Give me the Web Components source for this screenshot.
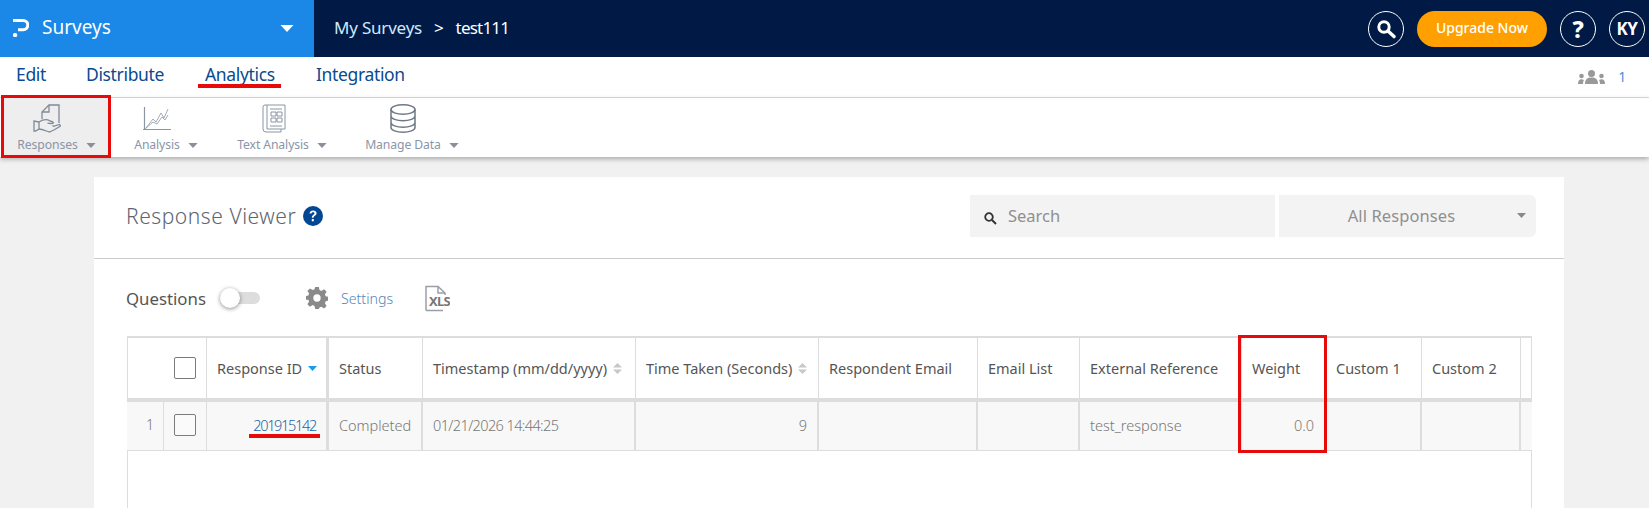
<!DOCTYPE html>
<html lang="en">
<head>
<meta charset="utf-8">
<title>Response Viewer</title>
<style>
  html, body { margin: 0; height: 508px; overflow: hidden; background: #f1f1f1; }
  body { font-family: "Noto Sans", "Open Sans", sans-serif; }
</style>
</head>
<body>
<app-header></app-header>
<nav-tabs></nav-tabs>
<tool-bar></tool-bar>
<response-viewer></response-viewer>

<script>
const caret = (color, w = 13, h = 7) =>
  `<svg width="${w}" height="${h}" viewBox="0 0 13 7"><path d="M0 0h13L6.5 7z" fill="${color}"/></svg>`;

class AppHeader extends HTMLElement {
  shadowRoot = this.attachShadow({ mode: 'open' });

  connectedCallback () {
    this.shadowRoot.innerHTML = `
      <style>
        :host { display: flex; height: 57px; background: #001a45; color: #fff; }
        .brand { width: 314px; box-sizing: border-box; background: #1b87e6; display: flex; align-items: center; padding: 0 20px 0 13px; }
        .brand svg:first-child { margin-right: 13px; margin-top: -1px; }
        .brand span { flex: 1; font-size: 19px; line-height: 24px; position: relative; top: -2px; }
        .crumbs { flex: 1; display: flex; align-items: center; padding-left: 20px; padding-bottom: 3px; box-sizing: border-box; font-size: 17px; color: #cfe8fd; letter-spacing: -.2px; }
        .crumbs i { font-style: normal; margin: 0 12px; color: #fff; }
        .crumbs b { font-weight: 400; color: #fff; letter-spacing: -.8px; }
        .actions { display: flex; align-items: center; padding-right: 4px; }
        .round { width: 34px; height: 34px; border: 1px solid #fff; border-radius: 50%; display: flex; align-items: center; justify-content: center; font-weight: 700; font-size: 17px; letter-spacing: -.5px; }
        .upgrade { width: 130px; height: 36px; border-radius: 18px; background: #ffa000; margin: 0 13px; display: flex; align-items: center; justify-content: center; font-size: 14px; font-weight: 500; padding-bottom: 3px; box-sizing: border-box; }
        .help { margin-right: 13px; font-size: 23px; font-weight: 800; }
      </style>
      <div class="brand">
        <svg width="16" height="18" viewBox="0 0 16 18" fill="none"><path d="M0 1.500h10.200a4.500 4.500 0 0 1 0 9.200H5" stroke="#fff" stroke-width="3"/><rect x="0" y="14" width="4.200" height="4" rx="1.500" fill="#fff"/></svg>
        <span>Surveys</span>
        ${caret('#fff', 14, 7)}
      </div>
      <div class="crumbs">My Surveys<i>&gt;</i><b>test111</b></div>
      <div class="actions">
        <div class="round"><svg width="20" height="20" viewBox="0 0 20 20" fill="none"><circle cx="8" cy="8" r="5.200" stroke="#fff" stroke-width="3"/><path d="M12 12l6 5.600" stroke="#fff" stroke-width="3.400" stroke-linecap="round"/></svg></div>
        <div class="upgrade">Upgrade Now</div>
        <div class="round help">?</div>
        <div class="round">KY</div>
      </div>`;
  }
}

class NavTabs extends HTMLElement {
  shadowRoot = this.attachShadow({ mode: 'open' });

  connectedCallback () {
    this.shadowRoot.innerHTML = `
      <style>
        :host { display: flex; align-items: center; height: 41px; box-sizing: border-box; background: #fff; border-bottom: 1px solid #ddd; font-size: 17.5px; color: #0a4a90; position: relative; letter-spacing: -.35px; }
        span { position: absolute; top: 5px; line-height: 24px; }
        .tabs { flex: 1; height: 100%; position: relative; }
        .mark { position: absolute; left: 198px; top: 27px; width: 83px; height: 4px; background: #e60a0a; }
        .users { display: flex; align-items: center; gap: 13px; padding-right: 23px; color: #4a90d9; font-size: 14px; }
      </style>
      <div class="tabs">
        <span style="left:16px">Edit</span>
        <span style="left:86px">Distribute</span>
        <span style="left:205px">Analytics</span>
        <span style="left:316px">Integration</span>
        <div class="mark"></div>
      </div>
      <div class="users">
        <svg width="27" height="14" viewBox="0 0 27 14" fill="#999"><circle cx="13.500" cy="3.500" r="3.500"/><path d="M7 14c0-5 2.500-6.500 6.500-6.500S20 9 20 14z"/><circle cx="3.500" cy="6" r="2.300"/><path d="M0 14c0-3 1.200-4.800 3.500-4.800 1 0 1.800.3 2.400.9C5.300 11 5 12.300 5 14z"/><circle cx="23.500" cy="6" r="2.300"/><path d="M27 14c0-3-1.200-4.800-3.500-4.800-1 0-1.800.3-2.400.9.600.9.900 2.200.9 3.900z"/></svg>
        <span style="position:static">1</span>
      </div>`;
  }
}

class ToolItem extends HTMLElement {
  shadowRoot = this.attachShadow({ mode: 'open' });

  connectedCallback () {
    this.shadowRoot.innerHTML = `
      <style>
        :host { display: flex; flex-direction: column; align-items: center; box-sizing: border-box; height: 59px; padding-top: 6px; flex: none; }
        :host([active]) { background: #eee; }
        .icon { height: 33px; display: flex; align-items: flex-start; justify-content: center; }
        .label { display: flex; align-items: center; gap: 8px; font-size: 12.2px; line-height: 16px; color: #8a95a8; letter-spacing: -.1px; }
      </style>
      <div class="icon"><slot name="icon"></slot></div>
      <div class="label"><slot></slot>${caret('#8a8f99', 10, 5)}</div>`;
  }
}

class ToolBar extends HTMLElement {
  shadowRoot = this.attachShadow({ mode: 'open' });

  connectedCallback () {
    this.shadowRoot.innerHTML = `
      <style>
        :host { display: flex; height: 59px; background: #fff; box-shadow: 0 2px 5px rgba(0,0,0,.3); position: relative; padding-left: 3px; }
        svg { fill: none; stroke: #8b96a5; stroke-width: 1; display: block; }
        .box { position: absolute; left: 1px; top: -3px; width: 110px; height: 63px; box-sizing: border-box; border: 3px solid #e60a0a; }
      </style>
      <tool-item active style="width:107px">
        <svg slot="icon" width="28" height="29" viewBox="0 0 28 29" style="margin-right:20px;stroke:#7f8a9a;stroke-width:1.300"><path d="M9 15V8l7-7h10v18"/><path d="M9 8h7V1"/><path d="M6 18c4-2.500 8-3 11-1 2 .2 3 .6 3.500 1.700-1 1-3 1-6 .4"/><path d="M6 25c3 0 7 2 10 3 3-.5 8-4 11.500-6l-1-1.500-6 1.800-1-.8"/><path d="M1 17l5 1v7l-3.500 2H1z"/></svg>
        Responses
      </tool-item>
      <tool-item style="width:112px">
        <svg slot="icon" width="28" height="24" viewBox="0 0 28 24" style="margin:3px 19px 0 0"><path d="M1.500 0v23M0 22.500h28" stroke-width="1.200"/><path d="M3 21l7-9 3 3 5-9 3 5 4-9M2 22l8-7 4 2 5-7 3 3 3-5" stroke-width=".8"/></svg>
        Analysis
      </tool-item>
      <tool-item style="width:120px">
        <svg slot="icon" width="24" height="29" viewBox="0 0 24 29" style="margin-right:16px"><path d="M5 25V1h18v24zM5 1H3a2 2 0 0 0-2 2v22a3 3 0 0 0 3 3h15v-3"/><path d="M8 5h12M8 22h12M9 8h5v4H9zM15 8h5v4h-5zM9 14h5v4H9zM15 14h5v4h-5z"/></svg>
        Text Analysis
      </tool-item>
      <tool-item style="width:140px">
        <svg slot="icon" width="26" height="29" viewBox="0 0 26 29" style="stroke:#6e7887;stroke-width:1.500;margin-right:18px"><ellipse cx="13" cy="5.500" rx="12" ry="4.700"/><path d="M1 5.500v18c0 2.800 5.500 4.700 12 4.700s12-1.900 12-4.700v-18M1 12c0 2.800 5.500 4.700 12 4.700S25 14.800 25 12M1 18.500c0 2.800 5.500 4.700 12 4.700s12-1.900 12-4.700"/></svg>
        Manage Data
      </tool-item>
      <div class="box"></div>`;
  }
}

class ResponseTable extends HTMLElement {
  shadowRoot = this.attachShadow({ mode: 'open' });

  connectedCallback () {
    const sort = '<svg width="9" height="11" viewBox="0 0 9 11" fill="#c8c8c8"><path d="M0 4.500L4.500 0 9 4.500zM0 6.500h9L4.500 11z"/></svg>';
    const down = '<svg width="9" height="5" viewBox="0 0 9 5" fill="#1b9ae6"><path d="M0 0h9L4.500 5z"/></svg>';
    // head, cell, width, align, head icon, right border, cell letter spacing
    const columns = [
      ['<span class="check"></span>', '<span class="check"></span>', 80, 'center'],
      ['Response ID', '<a>201915142</a>', 122, 'right', down, 3, '-1.3px'],
      ['Status', 'Completed', 94, 'left', '', 2],
      ['Timestamp (mm/dd/yyyy)', '01/21/2026 14:44:25', 213, 'left', sort, 2, '-.6px'],
      ['Time Taken (Seconds)', '9', 183, 'right', sort, 2],
      ['Respondent Email', '', 159, 'left', '', 2],
      ['Email List', '', 102, 'left', '', 2],
      ['External Reference', 'test_response', 162, 'left', '', 2],
      ['Weight', '0.0', 84, 'right', '', 2],
      ['Custom 1', '', 96, 'left', '', 2],
      ['Custom 2', '', 99, 'left', '', 2],
      ['', '', 11, 'left', '', 0]
    ];
    const head = columns.map((c, i) => `<div class="th" style="${i === 0 ? 'justify-content:flex-end;padding-right:10px' : ''}">${c[0]} ${c[4] || ''}</div>`).join('');
    const row = columns.map((c, i) => i === 0
      ? `<div class="td first"><b>1</b>${c[1]}</div>`
      : `<div class="td ${c[3]}" style="border-right-width:${c[5]}px;letter-spacing:${c[6] || '0'}">${c[1]}</div>`).join('');
    this.shadowRoot.innerHTML = `
      <style>
        :host { display: block; box-sizing: border-box; height: 172px; border: 1px solid #ddd; border-top-width: 2px; border-bottom: 0; font-size: 14.5px; position: relative; }
        .grid { display: grid; grid-template-columns: ${columns.map((c) => c[2] + 'px').join(' ')}; margin: 0 -1px; }
        .th { height: 64px; box-sizing: border-box; display: flex; align-items: center; gap: 6px; padding-left: 10px; color: #555; border-right: 1px solid #ddd; border-bottom: 4px solid #ddd; white-space: nowrap; }
        .th:first-child { padding-left: 0; border-left: 1px solid #ddd; }
        .th:nth-child(2) { border-right-width: 3px; }
        .th:last-child { border-right: 0; padding: 0; }
        .td { height: 49px; box-sizing: border-box; display: flex; align-items: center; padding: 0 10px 3px 10px; background: #f8f8f8; color: #777; font-weight: 300; border-right: 2px solid #ddd; border-bottom: 1px solid #ddd; white-space: nowrap; }
        .td:last-child { padding: 0; }
        .td.right { justify-content: flex-end; }
        .td.first { padding: 0; border-right-width: 1px; }
        .td.first b { font-weight: 300; font-size: 14px; width: 37px; align-self: stretch; box-sizing: border-box; display: flex; align-items: center; justify-content: flex-end; padding: 0 9px 3px 0; border-right: 1px solid #ddd; }
        .td.first .check { margin: -3px 0 0 10px; }
        .check { display: inline-block; width: 22px; height: 22px; box-sizing: border-box; border: 1px solid #7b7b7b; border-radius: 2px; background: #fff; }
        .td .check { background: #fafafa; }
        a { color: #1d63a8; }
      </style>
      <div class="grid">${head}${row}</div>`;
  }
}

class ResponseViewer extends HTMLElement {
  shadowRoot = this.attachShadow({ mode: 'open' });

  connectedCallback () {
    this.shadowRoot.innerHTML = `
      <style>
        :host { display: block; width: 1470px; height: 331px; margin: 20px 0 0 94px; background: #fff; position: relative; }
        .head { height: 82px; box-sizing: border-box; border-bottom: 1px solid #ccc; display: flex; align-items: center; padding: 0 28px 4px 32px; }
        h1 { margin: 0; font-size: 21px; font-weight: 300; color: #5e6470; letter-spacing: .55px; line-height: 28px; }
        .help { margin-left: 7px; }
        .spacer { flex: 1; }
        .search, .filter { height: 42px; background: #f3f3f3; display: flex; align-items: center; color: #8f8f8f; font-size: 16.5px; box-sizing: border-box; }
        .search { width: 305px; padding-left: 14px; gap: 11px; margin-right: 4px; }
        .filter { width: 257px; border-radius: 0 6px 6px 0; justify-content: center; position: relative; padding-right: 12px; letter-spacing: .1px; }
        .filter svg { position: absolute; right: 10px; top: 18px; }
        .tools { height: 77px; display: flex; align-items: center; padding: 1px 32px 0; box-sizing: border-box; }
        .questions { font-size: 16.8px; color: #555; }
        .toggle { width: 40px; height: 20px; margin-left: 14px; position: relative; }
        .toggle::before { content: ""; position: absolute; left: 8px; right: 0; top: 4px; height: 12px; border-radius: 6px; background: #ddd; }
        .toggle::after { content: ""; position: absolute; left: 0; top: 0; width: 20px; height: 20px; border-radius: 50%; background: #fff; box-shadow: 0 1px 4px rgba(0,0,0,.45); }
        .gear { margin-left: 46px; }
        .settings { margin-left: 13px; font-size: 14.2px; color: #5585bb; font-weight: 300; }
        .xls { margin-left: 31px; }
        .mark { position: absolute; border: 3px solid #e60a0a; box-sizing: border-box; }
        .line { position: absolute; background: #e60a0a; }
        response-table { margin: 0 32px 0 33px; }
      </style>
      <div class="head">
        <h1>Response Viewer</h1>
        <svg class="help" width="20" height="20" viewBox="0 0 20 20"><circle cx="10" cy="10" r="10" fill="#034694"/><path d="M6.500 7.600c.2-2 1.600-3.200 3.600-3.200 2.100 0 3.500 1.200 3.500 2.900 0 2.400-3 2.400-3 4.500H8.800c0-3 2.700-3 2.700-4.500 0-.7-.6-1.100-1.400-1.100-.9 0-1.500.5-1.600 1.400z" fill="#fff"/><rect x="8.800" y="13" width="2" height="2.300" fill="#fff"/></svg>
        <div class="spacer"></div>
        <div class="search">
          <svg width="13" height="13" viewBox="0 0 13 13" fill="none" style="margin-top:5px"><circle cx="5" cy="5" r="3.800" stroke="#333" stroke-width="1.800"/><path d="M8 8l4 4" stroke="#333" stroke-width="2"/></svg>
          Search
        </div>
        <div class="filter">All Responses ${caret('#888', 9, 5)}</div>
      </div>
      <div class="tools">
        <span class="questions">Questions</span>
        <div class="toggle"></div>
        <svg class="gear" width="22" height="22" viewBox="0 0 24 24" fill="#8a8a8a"><path d="M10 0h4l.7 3.400 2.100.9 2.900-1.900 2.800 2.800-1.900 2.900.9 2.100 3.400.7v4l-3.400.7-.9 2.100 1.900 2.900-2.800 2.800-2.900-1.900-2.100.9L14 24h-4l-.7-3.400-2.100-.9-2.900 1.900-2.800-2.800 1.900-2.900-.9-2.100L-.9 14v-4l3.400-.7.9-2.100L1.500 4.300l2.800-2.800 2.900 1.900 2.100-.9zM12 8a4 4 0 1 0 0 8 4 4 0 0 0 0-8z"/></svg>
        <span class="settings">Settings</span>
        <svg class="xls" width="26" height="27" viewBox="0 0 26 27" fill="none"><path d="M2 25.500V1.500h12l7 6.500v2M2 25.500h17" stroke="#9a9ea6" stroke-width="1.500"/><path d="M14 1.500v6.500h7" stroke="#9a9ea6" stroke-width="1.500"/><text x="5" y="21" font-family="Noto Sans, sans-serif" font-size="13" font-weight="700" fill="#777" letter-spacing="-.7">XLS</text></svg>
      </div>
      <response-table></response-table>
      <div class="mark" style="left:1144px;top:158px;width:89px;height:118px"></div>
      <div class="line" style="left:155px;top:257px;width:71px;height:4px"></div>`;
  }
}

customElements.define('app-header', AppHeader);
customElements.define('nav-tabs', NavTabs);
customElements.define('tool-item', ToolItem);
customElements.define('tool-bar', ToolBar);
customElements.define('response-table', ResponseTable);
customElements.define('response-viewer', ResponseViewer);
</script>
</body>
</html>
